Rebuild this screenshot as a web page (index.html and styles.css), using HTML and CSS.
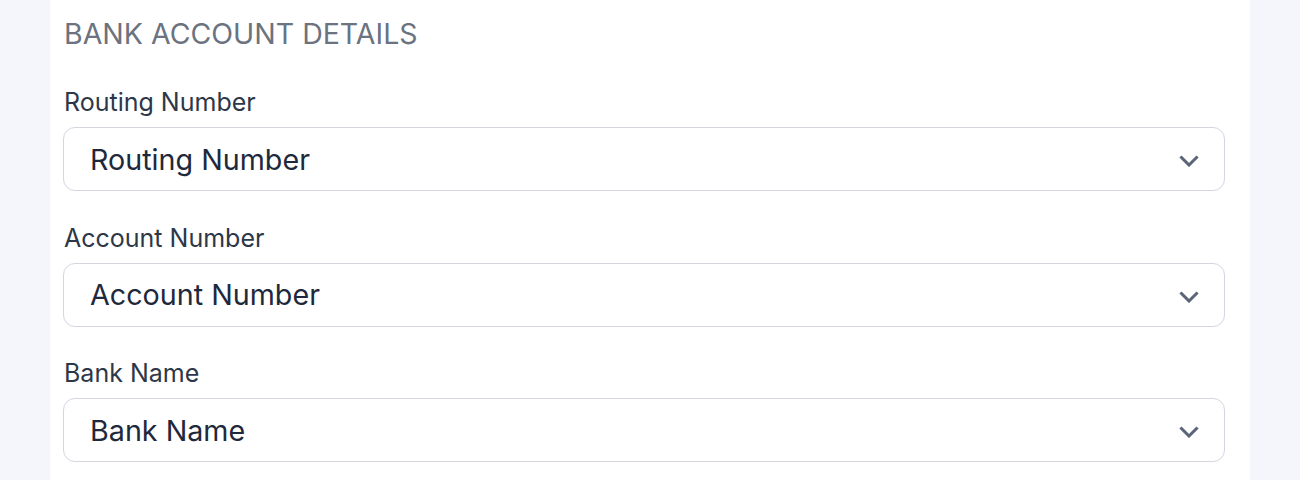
FILE: index.html
```html
<!DOCTYPE html>
<html>
<head>
<meta charset="utf-8">
<link rel="stylesheet" href="styles.css">
</head>
<body>
<div class="page">
  <section class="card">
    <h2 class="card-title">BANK ACCOUNT DETAILS</h2>
    <div class="field">
      <label class="field-label">Routing Number</label>
      <div class="select">
        <span class="select-value">Routing Number</span>
        <svg class="chevron" width="20" height="12" viewBox="0 0 20 12"><path d="M2.5 2.5 L10 10 L17.5 2.5" fill="none" stroke="#5b6579" stroke-width="3" stroke-linecap="square"/></svg>
      </div>
    </div>
    <div class="field">
      <label class="field-label">Account Number</label>
      <div class="select">
        <span class="select-value">Account Number</span>
        <svg class="chevron" width="20" height="12" viewBox="0 0 20 12"><path d="M2.5 2.5 L10 10 L17.5 2.5" fill="none" stroke="#5b6579" stroke-width="3" stroke-linecap="square"/></svg>
      </div>
    </div>
    <div class="field">
      <label class="field-label">Bank Name</label>
      <div class="select">
        <span class="select-value">Bank Name</span>
        <svg class="chevron" width="20" height="12" viewBox="0 0 20 12"><path d="M2.5 2.5 L10 10 L17.5 2.5" fill="none" stroke="#5b6579" stroke-width="3" stroke-linecap="square"/></svg>
      </div>
    </div>
  </section>
</div>
</body>
</html>
```
FILE: styles.css
```css
html, body {
  margin: 0;
  padding: 0;
  background: #f5f6fb;
  font-family: Inter, "Noto Sans", sans-serif;
}
.page {
  padding: 0 50px;
  height: 480px;
  overflow: hidden;
}
.card {
  background: #ffffff;
  padding: 14px 25px 40px 13px;
  height: 100%;
  box-sizing: border-box;
}
.card-title {
  margin: 0 0 0 1px;
  font-size: 28.5px;
  line-height: 40px;
  font-weight: 400;
  color: #6b7280;
}
.field {
  display: flex;
  flex-direction: column;
}
.card-title + .field {
  margin-top: 33px;
}
.field + .field {
  margin-top: 31.5px;
}
.field-label {
  margin-left: 1px;
  font-size: 25px;
  line-height: 30px;
  color: #2d3748;
  margin-bottom: 10px;
}
.select {
  height: 64px;
  box-sizing: border-box;
  border: 1px solid #d3d6e0;
  border-radius: 12px;
  display: flex;
  align-items: center;
  justify-content: space-between;
  padding: 0 25px 0 26px;
}
.select-value {
  font-size: 28.7px;
  color: #1e293b;
}
.chevron {
  display: block;
  margin-top: 4px;
}
```
